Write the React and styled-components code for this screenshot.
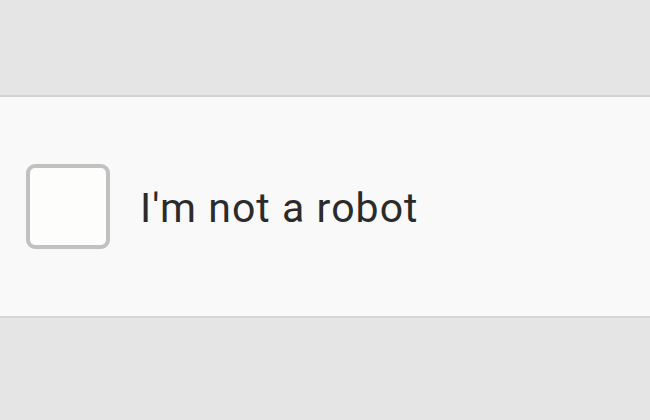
import styled, { createGlobalStyle } from "styled-components";

const GlobalStyle = createGlobalStyle`
  html, body {
    margin: 0;
    padding: 0;
    background: #e5e5e5;
  }
  body {
    font-family: Roboto, "Liberation Sans", Arial, sans-serif;
  }
`;

const Page = styled.div`
  width: 650px;
  height: 420px;
  padding-top: 95px;
  box-sizing: border-box;
  background: #e5e5e5;
  overflow: hidden;
`;

const Panel = styled.div`
  height: 223px;
  box-sizing: border-box;
  background: #f9f9f9;
  border-top: 2px solid #d3d3d3;
  border-bottom: 2px solid #d6d6d6;
  display: flex;
  align-items: center;
  padding-left: 26px;
  gap: 30px;
`;

const Box = styled.div`
  width: 84px;
  height: 85px;
  box-sizing: border-box;
  border: 4px solid #c1c1c1;
  border-radius: 9px;
  background: #fdfdfb;
`;

const Label = styled.span`
  font-size: 41px;
  color: #2b2b2b;
  letter-spacing: 1.05px;
  margin-top: 3px;
`;

export default function App() {
  return (
    <>
      <GlobalStyle />
      <Page>
        <Panel>
          <Box />
          <Label>I'm not a robot</Label>
        </Panel>
      </Page>
    </>
  );
}
